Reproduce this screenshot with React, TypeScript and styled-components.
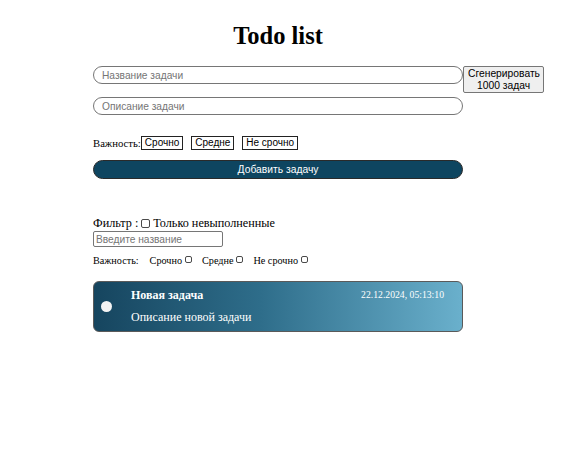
import React from "react";
import styled, { createGlobalStyle } from "styled-components";

const Global = createGlobalStyle`
  html, body { margin: 0; padding: 0; background: #fff; }
  body { font-family: "Liberation Serif", "Times New Roman", serif; }
`;

const Page = styled.div`
  padding: 21px 0 0 93px;
  width: 480px;
`;

const Title = styled.h1`
  width: 370px;
  margin: 0 0 15px;
  text-align: center;
  font-size: 24.5px;
  line-height: 30px;
  font-weight: bold;
  color: #000;
`;

const Row = styled.div`
  display: flex;
  align-items: flex-start;
`;

const Stack = styled.div`
  display: flex;
  flex-direction: column;
  gap: 13px;
`;

const RoundInput = styled.input`
  box-sizing: border-box;
  width: 370px;
  height: 18px;
  border: 1px solid #767676;
  border-radius: 10px;
  padding: 0 8px;
  font-family: "Liberation Sans", Arial, sans-serif;
  font-size: 10.2px;
  outline: none;
  &::placeholder { color: #757575; }
`;

const GenButton = styled.button`
  box-sizing: border-box;
  width: 81px;
  height: 27px;
  padding: 0 4px;
  background: #efefef;
  border: 1px solid #767676;
  border-radius: 2px;
  font-family: "Liberation Sans", Arial, sans-serif;
  font-size: 10.3px;
  line-height: 12px;
  color: #000;
`;

const ImportanceRow = styled.div`
  display: flex;
  align-items: center;
  margin-top: 21px;
  height: 14px;
`;

const SerifLabel = styled.span`
  font-family: "Liberation Serif", "Times New Roman", serif;
  font-size: 10.7px;
  color: #000;
`;

const Choices = styled.div`
  display: flex;
  gap: 8px;
`;

const ChoiceButton = styled.button`
  box-sizing: border-box;
  height: 14px;
  padding: 0 3px;
  background: #fff;
  border: 1px solid #222;
  border-radius: 0;
  font-family: "Liberation Sans", Arial, sans-serif;
  font-size: 10px;
  line-height: 12px;
  color: #000;
`;

const AddButton = styled.button`
  box-sizing: border-box;
  margin-top: 10px;
  width: 370px;
  height: 19px;
  background: #0e4560;
  border: 1px solid #2a2a2a;
  border-radius: 10px;
  color: #fff;
  font-family: "Liberation Sans", Arial, sans-serif;
  font-size: 10.3px;
  line-height: 16px;
  padding: 0;
`;

const Filter = styled.div`
  margin-top: 37px;
  display: flex;
  flex-direction: column;
  align-items: flex-start;
`;

const FilterLine = styled.div`
  display: flex;
  align-items: center;
  font-family: "Liberation Serif", "Times New Roman", serif;
  font-size: 12.2px;
  line-height: 15px;
  color: #000;
`;

const Box = styled.span<{ $size: number }>`
  display: inline-block;
  box-sizing: border-box;
  width: ${(p) => p.$size}px;
  height: ${(p) => p.$size}px;
  border: 1px solid #4a4a4a;
  border-radius: 2px;
  background: #fff;
`;

const FilterBox = styled(Box)`
  margin: 0 3px 0 3px;
`;

const SmallInput = styled.input`
  box-sizing: border-box;
  width: 130px;
  height: 16px;
  border: 1px solid #767676;
  border-radius: 2px;
  padding: 0 2px;
  font-family: "Liberation Sans", Arial, sans-serif;
  font-size: 10.2px;
  outline: none;
  &::placeholder { color: #757575; }
`;

const ImpFilter = styled.div`
  display: flex;
  align-items: flex-start;
  margin-top: 7px;
  font-family: "Liberation Serif", "Times New Roman", serif;
  font-size: 10.2px;
  line-height: 14px;
  color: #000;
`;

const ImpItem = styled.span<{ $gap: number }>`
  display: flex;
  align-items: flex-start;
  margin-left: ${(p) => p.$gap}px;
  & > span:last-child { margin: 2px 0 0 3px; }
`;

const Card = styled.div`
  box-sizing: border-box;
  margin-top: 13px;
  width: 370px;
  height: 51px;
  display: flex;
  align-items: center;
  border: 1px solid #5a5a5a;
  border-radius: 6px;
  background: linear-gradient(90deg, #16455f 0%, #2e6d8a 45%, #6ab0cc 100%);
  color: #fff;
`;

const Dot = styled.span`
  width: 11px;
  height: 11px;
  border-radius: 50%;
  background: #f4f4f4;
  margin-left: 7px;
  flex: none;
`;

const CardBody = styled.div`
  flex: 1;
  margin-left: 19px;
  padding-right: 18px;
  display: flex;
  flex-direction: column;
  gap: 7px;
`;

const CardTop = styled.div`
  display: flex;
  justify-content: space-between;
  align-items: flex-start;
`;

const CardTitle = styled.span`
  font-family: "Liberation Serif", "Times New Roman", serif;
  font-weight: bold;
  font-size: 12px;
  line-height: 15px;
`;

const CardDate = styled.span`
  font-family: "Liberation Serif", "Times New Roman", serif;
  font-size: 9.7px;
  line-height: 13px;
`;

const CardDesc = styled.span`
  font-family: "Liberation Serif", "Times New Roman", serif;
  font-size: 12px;
  line-height: 15px;
`;

export default function App() {
  return (
    <>
      <Global />
      <Page>
        <Title>Todo list</Title>
        <Row>
          <Stack>
            <RoundInput placeholder="Название задачи" />
            <RoundInput placeholder="Описание задачи" />
          </Stack>
          <GenButton>Сгенерировать 1000 задач</GenButton>
        </Row>
        <ImportanceRow>
          <SerifLabel>Важность:</SerifLabel>
          <Choices>
            <ChoiceButton>Срочно</ChoiceButton>
            <ChoiceButton>Средне</ChoiceButton>
            <ChoiceButton>Не срочно</ChoiceButton>
          </Choices>
        </ImportanceRow>
        <AddButton>Добавить задачу</AddButton>
        <Filter>
          <FilterLine>
            Фильтр :<FilterBox $size={9} />Только невыполненные
          </FilterLine>
          <SmallInput placeholder="Введите название" />
          <ImpFilter>
            <span>Важность:</span>
            <ImpItem $gap={11}>
              <span>Срочно</span>
              <Box $size={7} />
            </ImpItem>
            <ImpItem $gap={10}>
              <span>Средне</span>
              <Box $size={7} />
            </ImpItem>
            <ImpItem $gap={10}>
              <span>Не срочно</span>
              <Box $size={7} />
            </ImpItem>
          </ImpFilter>
        </Filter>
        <Card>
          <Dot />
          <CardBody>
            <CardTop>
              <CardTitle>Новая задача</CardTitle>
              <CardDate>22.12.2024, 05:13:10</CardDate>
            </CardTop>
            <CardDesc>Описание новой задачи</CardDesc>
          </CardBody>
        </Card>
      </Page>
    </>
  );
}
